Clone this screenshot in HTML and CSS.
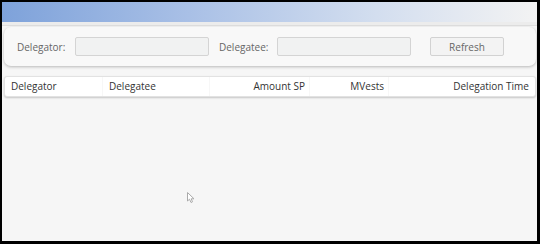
FILE: index.html
```html
<html>
  <head>
    <link rel="stylesheet" href="styles.css">
  </head>
  <body>
    <div class="page">
      <div class="topbar"></div>
      <div class="strip"></div>
      <div class="filters">
        <label class="lbl">Delegator:</label>
        <input type="text" class="field" id="delegator"/>
        <label class="lbl">Delegatee:</label>
        <input type="text" class="field" id="delegatee"/>
        <button class="refresh">Refresh</button>
      </div>
      <div class="thead">
        <div class="c c1">Delegator</div>
        <div class="c c2">Delegatee</div>
        <div class="c c3">Amount SP</div>
        <div class="c c4">MVests</div>
        <div class="c c5">Delegation Time</div>
      </div>
      <svg class="cursor" width="8" height="12" viewBox="0 0 8 12">
        <path d="M0.5 0.5 L0.5 9 L2.5 7.2 L4 10.5 L5.5 9.8 L4.2 6.8 L7 6.8 Z" fill="#fff" stroke="#aaa" stroke-width="1"/>
      </svg>
    </div>
  </body>
</html>
```

FILE: styles.css
```css
*{
  margin: 0px;
  padding: 0px;
  box-sizing: border-box;
}
html{
  background: #000;
}
body{
  margin: 2px 3px 3px 2px;
  font-family: "Open Sans", "Liberation Sans", sans-serif;
  font-size: 10px;
}
.page{
  position: relative;
  height: 239px;
  background: #f6f6f6;
  overflow: hidden;
}
.topbar{
  height: 20px;
  background: linear-gradient(to right, #7ea2da, #a9c0e6 35%, #d3deef 70%, #f3f3f3);
}
.strip{
  height: 4px;
  background: #ececec;
  border-bottom: 1px solid #dedede;
}
.filters{
  display: flex;
  align-items: center;
  height: 39px;
  margin: 1px 1px 0 2px;
  padding: 0 0 0 13px;
  background: #f8f8f8;
  border-radius: 7px;
  box-shadow: 0 1px 3px rgba(0,0,0,0.25);
  color: #666;
}
.lbl{
  width: 58px;
}
.field{
  width: 134px;
  height: 19px;
  border: 1px solid #d4d4d4;
  border-radius: 2px;
  background: #f1f2f2;
  margin-right: 10px;
}
.refresh{
  width: 74px;
  height: 19px;
  margin-left: 9px;
  border: 1px solid #d2d2d2;
  border-radius: 2px;
  background: #f3f3f3;
  color: #666;
  font-family: "Open Sans", "Liberation Sans", sans-serif;
  font-size: 10px;
}
.thead{
  display: flex;
  height: 21px;
  margin: 10px 1px 0 2px;
  background: #fff;
  border: 1px solid #e2e2e2;
  border-radius: 3px;
  box-shadow: 0 1px 2px rgba(0,0,0,0.2);
  color: #333;
  line-height: 19px;
}
.c{
  padding: 0 6px;
  border-right: 1px solid #f7f7f7;
}
.c1{
  width: 98px;
}
.c2{
  width: 107px;
}
.c3{
  width: 100px;
  text-align: right;
  padding-right: 4px;
}
.c4{
  width: 79px;
  text-align: right;
  padding-right: 4px;
}
.c5{
  flex: 1;
  text-align: right;
  border-right: none;
}
.cursor{
  position: absolute;
  left: 185px;
  top: 190px;
}
```
